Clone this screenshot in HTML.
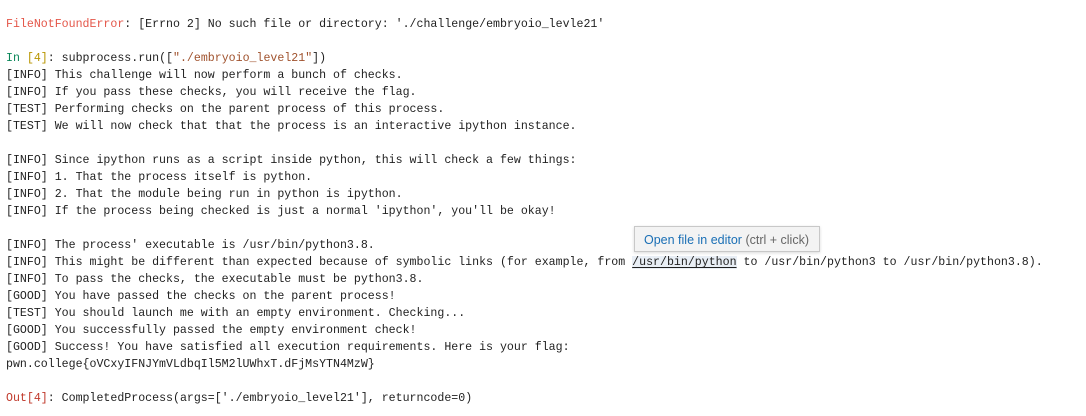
<!DOCTYPE html>
<html><head><meta charset="utf-8"><style>
html,body{margin:0;padding:0;background:#fff;width:1086px;height:416px;overflow:hidden}
pre{position:absolute;left:6px;top:16px;margin:0;font-family:"Liberation Mono",monospace;font-size:11.6px;line-height:17px;color:#1f1f1f;white-space:pre}
.err{color:#e45649}.in{color:#098658}.n{color:#b89500}.s{color:#a0522d}.out{color:#c0392b}
.lnk{text-decoration:underline;text-underline-offset:2px;background:#e8eef5}
.tip{position:absolute;left:634px;top:226px;width:186px;height:26px;box-sizing:border-box;border:1px solid #c8c8c8;background:#f3f3f3;box-shadow:0 1px 3px rgba(0,0,0,.15);font-family:"Liberation Sans",sans-serif;font-size:12.5px;line-height:26px;padding-left:9px;color:#1a6fb5;white-space:nowrap}
.tip span{color:#666}
</style></head><body>
<pre><span class="err">FileNotFoundError</span>: [Errno 2] No such file or directory: './challenge/embryoio_levle21'

<span class="in">In</span> <span class="n">[4]</span>: subprocess.run([<span class="s">"./embryoio_level21"</span>])
[INFO] This challenge will now perform a bunch of checks.
[INFO] If you pass these checks, you will receive the flag.
[TEST] Performing checks on the parent process of this process.
[TEST] We will now check that that the process is an interactive ipython instance.

[INFO] Since ipython runs as a script inside python, this will check a few things:
[INFO] 1. That the process itself is python.
[INFO] 2. That the module being run in python is ipython.
[INFO] If the process being checked is just a normal 'ipython', you'll be okay!

[INFO] The process' executable is /usr/bin/python3.8.
[INFO] This might be different than expected because of symbolic links (for example, from <span class="lnk">/usr/bin/python</span> to /usr/bin/python3 to /usr/bin/python3.8).
[INFO] To pass the checks, the executable must be python3.8.
[GOOD] You have passed the checks on the parent process!
[TEST] You should launch me with an empty environment. Checking...
[GOOD] You successfully passed the empty environment check!
[GOOD] Success! You have satisfied all execution requirements. Here is your flag:
pwn.college{oVCxyIFNJYmVLdbqIl5M2lUWhxT.dFjMsYTN4MzW}

<span class="out">Out[4]</span>: CompletedProcess(args=['./embryoio_level21'], returncode=0)</pre>
<div class="tip">Open file in editor <span>(ctrl + click)</span></div>
</body></html>
